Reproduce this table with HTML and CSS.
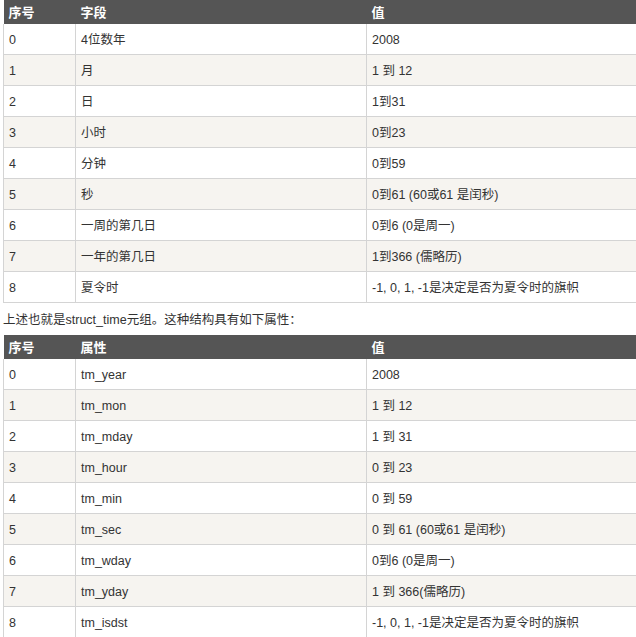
FILE: index.html
```html
<!DOCTYPE html>
<html lang="zh">
<head>
<meta charset="utf-8">
<link rel="stylesheet" href="styles.css">
</head>
<body>
<div class="page">
  <table class="ref">
    <colgroup><col class="c1"><col class="c2"><col class="c3"></colgroup>
    <thead><tr><th>序号</th><th>字段</th><th>值</th></tr></thead>
    <tbody>
      <tr><td>0</td><td>4位数年</td><td>2008</td></tr>
      <tr><td>1</td><td>月</td><td>1 到 12</td></tr>
      <tr><td>2</td><td>日</td><td>1到31</td></tr>
      <tr><td>3</td><td>小时</td><td>0到23</td></tr>
      <tr><td>4</td><td>分钟</td><td>0到59</td></tr>
      <tr><td>5</td><td>秒</td><td>0到61 (60或61 是闰秒)</td></tr>
      <tr><td>6</td><td>一周的第几日</td><td>0到6 (0是周一)</td></tr>
      <tr><td>7</td><td>一年的第几日</td><td>1到366 (儒略历)</td></tr>
      <tr><td>8</td><td>夏令时</td><td>-1, 0, 1, -1是决定是否为夏令时的旗帜</td></tr>
    </tbody>
  </table>
  <p class="note">上述也就是struct_time元组。这种结构具有如下属性：</p>
  <table class="ref">
    <colgroup><col class="c1"><col class="c2"><col class="c3"></colgroup>
    <thead><tr><th>序号</th><th>属性</th><th>值</th></tr></thead>
    <tbody>
      <tr><td>0</td><td>tm_year</td><td>2008</td></tr>
      <tr><td>1</td><td>tm_mon</td><td>1 到 12</td></tr>
      <tr><td>2</td><td>tm_mday</td><td>1 到 31</td></tr>
      <tr><td>3</td><td>tm_hour</td><td>0 到 23</td></tr>
      <tr><td>4</td><td>tm_min</td><td>0 到 59</td></tr>
      <tr><td>5</td><td>tm_sec</td><td>0 到 61 (60或61 是闰秒)</td></tr>
      <tr><td>6</td><td>tm_wday</td><td>0到6 (0是周一)</td></tr>
      <tr><td>7</td><td>tm_yday</td><td>1 到 366(儒略历)</td></tr>
      <tr><td>8</td><td>tm_isdst</td><td>-1, 0, 1, -1是决定是否为夏令时的旗帜</td></tr>
    </tbody>
  </table>
</div>
</body>
</html>
```

FILE: styles.css
```css
html, body {
  margin: 0;
  padding: 0;
  background: #fff;
}
body {
  font-family: "Liberation Sans", "Noto Sans CJK SC", sans-serif;
  font-size: 12.5px;
  color: #333;
  overflow: hidden;
}
.page {
  width: 636px;
  overflow: hidden;
  padding-left: 3px;
  box-sizing: border-box;
}
.ref {
  border-collapse: collapse;
  table-layout: fixed;
  width: 700px;
}
.c1 { width: 72px; }
.c2 { width: 291px; }
.c3 { width: 337px; }
.ref th {
  background: #555;
  color: #fff;
  font-weight: bold;
  font-size: 13px;
  text-align: left;
  height: 24px;
  padding: 2px 5px 0;
  line-height: 22px;
  border: none;
  box-sizing: border-box;
}
.ref td {
  border: 1px solid #d4d4d4;
  border-top: none;
  height: 29px;
  padding: 1px 5px 0;
  vertical-align: middle;
  line-height: 18px;
}
.ref tbody tr:nth-child(even) td {
  background: #f6f4f0;
}
.note {
  margin: 0;
  height: 32px;
  line-height: 34px;
}
```
